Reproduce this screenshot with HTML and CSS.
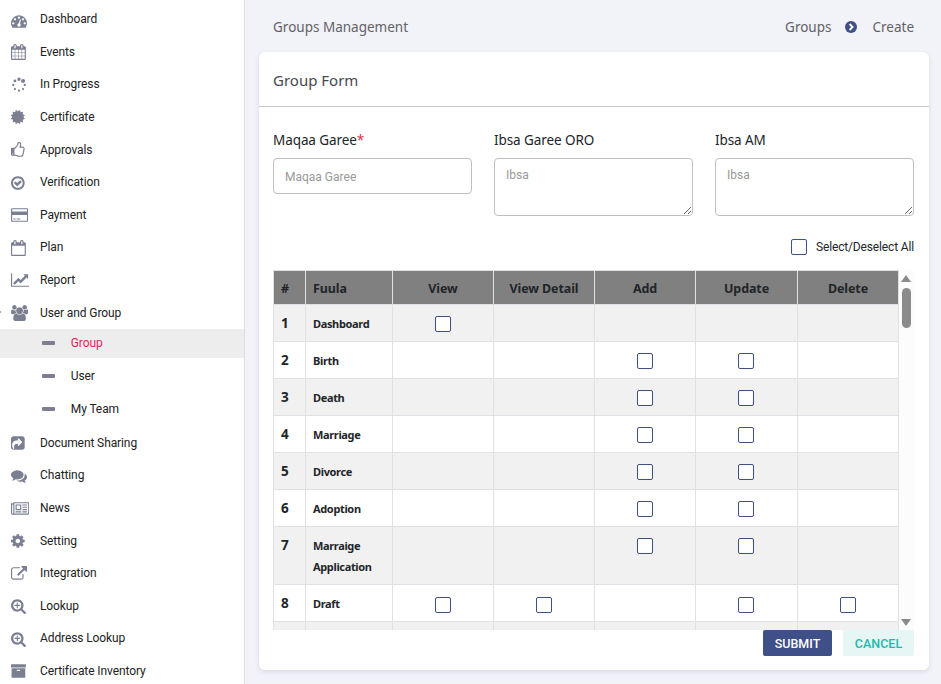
FILE: index.html
```html
<!DOCTYPE html>
<html lang="en">
<head>
<meta charset="utf-8">
<title>Groups Management</title>
<link rel="stylesheet" href="styles.css">
</head>
<body>
<nav class="sidebar" id="sidebar"></nav>
<main class="main">
  <header class="topbar">
    <span class="page-title">Groups Management</span>
    <span class="crumb-parent">Groups</span>
    <svg class="crumb-icon" viewBox="0 0 12 12"><circle cx="6" cy="6" r="6"/><path d="M4.6 3l3 3-3 3"/></svg>
    <span class="crumb-current">Create</span>
  </header>
  <section class="card">
    <h1 class="card-title"><span>Group Form</span></h1>
    <div class="card-body">
      <div class="fields">
        <label class="field"><span class="label l1">Maqaa Garee<b>*</b></span><input class="control" placeholder="Maqaa Garee"></label>
        <label class="field"><span class="label l2">Ibsa Garee ORO</span><textarea class="control area" placeholder="Ibsa"></textarea></label>
        <label class="field"><span class="label l3">Ibsa AM</span><textarea class="control area" placeholder="Ibsa"></textarea></label>
      </div>
      <label class="select-all"><input type="checkbox" class="check"><span>Select/Deselect All</span></label>
      <div class="table-wrap">
        <table>
          <colgroup><col class="c-num"><col class="c-name"><col class="c-act"><col class="c-act"><col class="c-act"><col class="c-upd"><col class="c-act"></colgroup>
          <thead><tr><th>#</th><th>Fuula</th><th>View</th><th>View Detail</th><th>Add</th><th>Update</th><th>Delete</th></tr></thead>
          <tbody id="rows"></tbody>
        </table>
        <div class="scrollbar"><i class="arrow up"></i><i class="thumb"></i><i class="arrow down"></i></div>
      </div>
      <div class="actions"><button class="btn submit">SUBMIT</button><button class="btn cancel">CANCEL</button></div>
    </div>
  </section>
</main>
<script src="app.js"></script>
</body>
</html>
```
FILE: styles.css
```css
* { box-sizing: border-box; }
body { margin: 0; height: 684px; overflow: hidden; display: flex; background: #f2f2f9; font-family: Roboto, sans-serif; font-size: 12px; color: #212529; }
.sidebar { width: 245px; flex: none; padding-top: 2.9px; background: #fff; border-right: 1px solid #dedee3; overflow: hidden; letter-spacing: -.1px; }
.item { display: flex; align-items: center; height: 32.6px; padding-left: 10.6px; color: #222; position: relative; }
.sub ~ .item { height: 32.57px; }
.item svg { height: 16px; flex: none; margin-top: 1px; fill: #7b7f92; }
.icon { width: 29.4px; flex: none; display: flex; }
.item:first-child svg { margin-top: 3px; }
.item.open::before { content: ""; position: absolute; left: 0; top: 15px; width: 1px; height: 2px; background: #aaa; }
.sub { display: flex; align-items: center; height: 29px; margin-bottom: 3.8px; padding-left: 42px; color: #222; }
.sub:has(+ .item) { margin-bottom: 3.2px; }
.sub i { width: 13px; height: 4px; border-radius: 1px; background: #7b7f92; margin-right: 15.8px; }
.sub.active { background: #ededed; color: #e91e63; }
.main { flex: 1; padding: 0 12px 0 14px; }
.topbar { height: 52px; padding: 1px 15px 0 14px; display: flex; align-items: center; font-family: "Noto Sans", sans-serif; font-size: 13.5px; color: #626267; }
.page-title { margin-right: auto; }
.crumb-icon { width: 12px; height: 12px; margin: 1px 15px 0 14px; fill: #3f4f87; }
.crumb-icon path { fill: none; stroke: #fff; stroke-width: 1.8; }
.card { height: 618px; background: #fff; border-radius: 6px; box-shadow: 0 2px 5px rgba(60,60,100,.13); }
.card-title { margin: 0; height: 55px; padding: 1px 14px 0; display: flex; align-items: center; border-bottom: 1px solid #c6c6c8; font: 400 15px "Noto Sans", sans-serif; color: #46494f; }
.card-body { padding: 22px 15px 0 14px; }
.fields { display: grid; grid-template-columns: repeat(3, 199px); gap: 22px; height: 110px; }
.field { display: flex; flex-direction: column; }
.label { height: 29px; line-height: 23px; font-family: "Noto Sans", sans-serif; font-size: 13.5px; letter-spacing: -.08px; white-space: nowrap; }
.label b { color: #e0304a; font-weight: 400; }
.control { width: 199px; height: 36px; padding: 1px 11px 0; border: 1px solid #bfbfc1; border-radius: 4px; background: #fff; font: 12px Roboto, sans-serif; }
.area { height: 58px; padding-top: 9px; line-height: 14px; resize: both; }
.control::placeholder { color: #999; }
.select-all { display: flex; justify-content: flex-end; align-items: center; gap: 9px; height: 16px; letter-spacing: -.15px; }
.check { appearance: none; display: block; width: 16px; height: 16px; margin: 0; border: 1px solid #3f4f87; border-radius: 2px; background: #fff; }
.table-wrap { display: flex; justify-content: space-between; height: 360px; margin-top: 15px; overflow: hidden; }
table { width: 626px; flex: none; align-self: flex-start; table-layout: fixed; border-collapse: collapse; font-family: "Noto Sans", sans-serif; font-weight: 700; }
.c-num { width: 32px; }
.c-name { width: 87px; }
.c-act { width: 101px; }
.c-upd { width: 102px; }
th, td { border: 1px solid #dee2e6; padding: 0 7px; }
th { height: 34px; padding-top: 1px; background: #808080; font-size: 12.5px; letter-spacing: -.1px; text-align: center; }
th:first-child, th:nth-child(2) { text-align: left; }
td { height: 37px; font-size: 11px; line-height: 21px; letter-spacing: -.35px; vertical-align: top; padding-top: 8px; }
td:first-child { font-size: 13.5px; padding-top: 8px; line-height: 20px; }
td .check { margin: 3px auto 0; }
td:nth-child(6) { padding-right: 9px; }
tr.tall td { height: 58px; }
.draft .check { margin-top: 4px; }
tbody tr:nth-child(odd) { background: #f1f1f1; }
.scrollbar { width: 15px; padding: 5px 0 4px 2px; display: flex; flex-direction: column; align-items: flex-start; background: #fcfcfc; }
.arrow { border: 5px solid transparent; width: 0; height: 0; }
.up { border-bottom: 7px solid #8a8a8a; border-top: 0; }
.down { border-top: 7px solid #8a8a8a; border-bottom: 0; margin-top: auto; }
.thumb { width: 9px; height: 40px; margin: 6px 0 0 1px; border-radius: 5px; background: #8b8b8b; }
.actions { display: flex; justify-content: flex-end; gap: 11px; }
.btn { height: 26px; padding: 1px 0 0; border: 0; border-radius: 2px; font: 500 12.5px Roboto, sans-serif; }
.submit { width: 69px; background: #3f4f87; color: #fff; }
.cancel { width: 71px; background: #e5f6f5; color: #1db9aa; }
```
FILE: app.js
```js
const calFrame = "m768 0v-288q0-14-9-23t-23-9h-64q-14 0-23 9t-9 23v288q0 14 9 23t23 9h64q14 0 23-9t9-23zm384-64v1280q0 52-38 90t-90 38h-1408q-52 0-90-38t-38-90v-1280q0-52 38-90t90-38h128v-96q0-66 47-113t113-47h64q66 0 113 47t47 113v96h384v-96q0-66 47-113t113-47h64q66 0 113 47t47 113v96h128q52 0 90 38t38 90z";
const calPegs = "m384-1216v-288q0-14-9-23t-23-9h-64q-14 0-23 9t-9 23v288q0 14 9 23t23 9h64q14 0 23-9t9-23z";
const zoomIn = "M1024 800v64q0 13-9.5 22.5t-22.5 9.5h-224v224q0 13-9.5 22.5t-22.5 9.5h-64q-13 0-22.5-9.5t-9.5-22.5v-224h-224q-13 0-22.5-9.5t-9.5-22.5v-64q0-13 9.5-22.5t22.5-9.5h224v-224q0-13 9.5-22.5t22.5-9.5h64q13 0 22.5 9.5t9.5 22.5v224h224q13 0 22.5 9.5t9.5 22.5zm128 32q0-185-131.5-316.5t-316.5-131.5-316.5 131.5-131.5 316.5 131.5 316.5 316.5 131.5 316.5-131.5 131.5-316.5zm512 832q0 53-37.5 90.5t-90.5 37.5q-54 0-90-38l-343-342q-179 124-399 124-143 0-273.5-55.5t-225-150-150-225-55.5-273.5 55.5-273.5 150-225 225-150 273.5-55.5 273.5 55.5 225 150 150 225 55.5 273.5q0 220-124 399l343 343q37 37 37 90z";

/* Each icon: left edge of the view box, width in 1/112 px units, path */
const icons = {
  gauge: [0, 1792, "M384 1152q0-53-37.5-90.5t-90.5-37.5-90.5 37.5-37.5 90.5 37.5 90.5 90.5 37.5 90.5-37.5 37.5-90.5zm192-448q0-53-37.5-90.5t-90.5-37.5-90.5 37.5-37.5 90.5 37.5 90.5 90.5 37.5 90.5-37.5 37.5-90.5zm428 481l101-382q6-26-7.5-48.5t-38.5-29.5-48 6.5-30 39.5l-101 382q-60 5-107 43.5t-63 98.5q-20 77 20 146t117 89 146-20 89-117q16-60-6-117t-72-91zm660-33q0-53-37.5-90.5t-90.5-37.5-90.5 37.5-37.5 90.5 37.5 90.5 90.5 37.5 90.5-37.5 37.5-90.5zm-640-640q0-53-37.5-90.5t-90.5-37.5-90.5 37.5-37.5 90.5 37.5 90.5 90.5 37.5 90.5-37.5 37.5-90.5zm448 192q0-53-37.5-90.5t-90.5-37.5-90.5 37.5-37.5 90.5 37.5 90.5 90.5 37.5 90.5-37.5 37.5-90.5zm320 448q0 261-141 483-19 29-54 29h-1402q-35 0-54-29-141-221-141-483 0-182 71-348t191-286 286-191 348-71 348 71 286 191 191 286 71 348z"],
  calendar: [64, 1728, "M192 1664h288v-288h-288v288zm352 0h320v-288h-320v288zm-352-352h288v-320h-288v320zm352 0h320v-320h-320v320zm-352-384h288v-288h-288v288zm736 736h320v-288h-320v288zm-384-736h320v-288h-320v288zm768 736h288v-288h-288v288zm-384-352h320v-320h-320v320zm-352-864v-288q0-13-9.5-22.5t-22.5-9.5h-64q-13 0-22.5 9.5t-9.5 22.5v288q0 13 9.5 22.5t22.5 9.5h64q13 0 22.5-9.5t9.5-22.5zm736 864h288v-320h-288v320zm-384-384h320v-288h-320v288zm384 0h288v-288h-288v288zm32-480v-288q0-13-9.5-22.5t-22.5-9.5h-64q-13 0-22.5 9.5t-9.5 22.5v288q0 13 9.5 22.5t22.5 9.5h64q13 0 22.5-9.5t9.5-22.5zm384-64v1280q0 52-38 90t-90 38h-1408q-52 0-90-38t-38-90v-1280q0-52 38-90t90-38h128v-96q0-66 47-113t113-47h64q66 0 113 47t47 113v96h384v-96q0-66 47-113t113-47h64q66 0 113 47t47 113v96h128q52 0 90 38t38 90z"],
  spinner: [0, 1792, [[896,256,190],[1350,440,224],[440,440,160],[256,896,128],[440,1350,128],[896,1536,128],[1350,1350,128],[1536,896,128]].map(([x, y, r]) => `M${x - r} ${y}a${r} ${r} 0 1 0 ${2 * r} 0a${r} ${r} 0 1 0 ${-2 * r} 0z`).join("")],
  seal: [128, 1664, "M1504 896l138 135q30 28 20 70-12 41-52 51l-188 48 53 186q12 41-19 70-29 31-70 19l-186-53-48 188q-10 40-51 52-12 2-19 2-31 0-51-22l-135-138-135 138q-28 30-70 20-41-11-51-52l-48-188-186 53q-41 12-70-19-31-29-19-70l53-186-188-48q-40-10-52-51-10-42 20-70l138-135-138-135q-30-28-20-70 12-41 52-51l188-48-53-186q-12-41 19-70 29-31 70-19l186 53 48-188q10-41 51-51 41-12 70 19l135 139 135-139q29-30 70-19 41 10 51 51l48 188 186-53q41-12 70 19 31 29 19 70l-53 186 188 48q40 10 52 51 10 42-20 70z"],
  thumb: [128, 1664, "M384 1344q0-26-19-45t-45-19-45 19-19 45 19 45 45 19 45-19 19-45zm1152-576q0-51-39-89.5t-89-38.5h-352q0-58 48-159.5t48-160.5q0-98-32-145t-128-47q-26 26-38 85t-30.5 125.5-59.5 109.5q-22 23-77 91-4 5-23 30t-31.5 41-34.5 42.5-40 44-38.5 35.5-40 27-35.5 9h-32v640h32q13 0 31.5 3t33 6.5 38 11 35 11.5 35.5 12.5 29 10.5q211 73 342 73h121q192 0 192-167 0-26-5-56 30-16 47.5-52.5t17.5-73.5-18-69q53-50 53-119 0-25-10-55.5t-25-47.5q32-1 53.5-47t21.5-81zm128-1q0 89-49 163 9 33 9 69 0 77-38 144 3 21 3 43 0 101-60 178 1 139-85 219.5t-227 80.5h-129q-96 0-189.5-22.5t-216.5-65.5q-116-40-138-40h-288q-53 0-90.5-37.5t-37.5-90.5v-640q0-53 37.5-90.5t90.5-37.5h274q36-24 137-155 58-75 107-128 24-25 35.5-85.5t30.5-126.5 62-108q39-37 90-37 84 0 151 32.5t102 101.5 35 186q0 93-48 192h176q104 0 180 76t76 179z"],
  check: [128, 1664, "M1299 813l-422 422q-19 19-45 19t-45-19l-294-294q-19-19-19-45t19-45l102-102q19-19 45-19t45 19l147 147 275-275q19-19 45-19t45 19l102 102q19 19 19 45t-19 45zm141 83q0-148-73-273t-198-198-273-73-273 73-198 198-73 273 73 273 198 198 273 73 273-73 198-198 73-273zm224 0q0 209-103 385.5t-279.5 279.5-385.5 103-385.5-103-279.5-279.5-103-385.5 103-385.5 279.5-279.5 385.5-103 385.5 103 279.5 279.5 103 385.5z"],
  card: [0, 1920, "M1760 128q66 0 113 47t47 113v1216q0 66-47 113t-113 47h-1600q-66 0-113-47t-47-113v-1216q0-66 47-113t113-47h1600zm-1600 128q-13 0-22.5 9.5t-9.5 22.5v224h1664v-224q0-13-9.5-22.5t-22.5-9.5h-1600zm1600 1280q13 0 22.5-9.5t9.5-22.5v-608h-1664v608q0 13 9.5 22.5t22.5 9.5h1600zm-1504-128v-128h256v128h-256zm384 0v-128h384v128h-384z"],
  plan: [64, 1728, "M192 1664h1408v-1024h-1408v1024z" + calPegs + calFrame],
  chart: [0, 2048, "M2048 1536v128h-2048v-1536h128v1408h1920zm-128-1248v435q0 21-19.5 29.5t-35.5-7.5l-121-121-633 633q-10 10-23 10t-23-10l-233-233-416 416-192-192 585-585q10-10 23-10t23 10l233 233 464-464-121-121q-16-16-7.5-35.5t29.5-19.5h435q14 0 23 9t9 23z"],
  users: [0, 1920, "M593 896q-162 5-265 128h-134q-82 0-138-40.5t-56-118.5q0-353 124-353 6 0 43.5 21t97.5 42.5 119 21.5q67 0 133-23-5 37-5 66 0 159 93 283zm1071 637q0 120-73 189.5t-194 69.5h-874q-121 0-194-69.5t-73-189.5q0-53 3.5-103.5t14-109 26.5-108.5 43-97.5 62-81 85.5-53.5 111.5-20q10 0 43 21.5t73 48 107 48 135 21.5 135-21.5 107-48 73-48 43-21.5q61 0 111.5 20t85.5 53.5 62 81 43 97.5 26.5 108.5 14 109 3.5 103.5zm-1024-1277q0 106-75 181t-181 75-181-75-75-181 75-181 181-75 181 75 75 181zm704 384q0 159-112.5 271.5t-271.5 112.5-271.5-112.5-112.5-271.5 112.5-271.5 271.5-112.5 271.5 112.5 112.5 271.5zm576 225q0 78-56 118.5t-138 40.5h-134q-103-123-265-128 93-124 93-283 0-29-5-66 66 23 133 23 59 0 119-21.5t97.5-42.5 43.5-21q124 0 124 353zm-128-609q0 106-75 181t-181 75-181-75-75-181 75-181 181-75 181 75 75 181z"],
  share: [128, 1664, "M1005 1197l352-352q19-19 19-45t-19-45l-352-352q-30-31-69-14-40 17-40 59v160q-119 0-216 19.5t-162.5 51-114 79-76.5 95.5-44.5 109-21.5 111.5-5 110.5q0 181 167 404 11 12 25 12 7 0 13-3 22-9 19-33-44-354 62-473 46-52 130-75.5t224-23.5v160q0 42 40 59 12 5 24 5 26 0 45-19zm659-781v960q0 119-84.5 203.5t-203.5 84.5h-960q-119 0-203.5-84.5t-84.5-203.5v-960q0-119 84.5-203.5t203.5-84.5h960q119 0 203.5 84.5t84.5 203.5z"],
  comments: [0, 1792, "M1408 768q0 139-94 257t-256.5 186.5-353.5 68.5q-86 0-176-16-124 88-278 128-36 9-86 16h-3q-11 0-20.5-8t-11.5-21q-1-3-1-6.5t.5-6.5 2-6l2.5-5 3.5-5.5 4-5 4.5-5 4-4.5q5-6 23-25t26-29.5 22.5-29 25-38.5 20.5-44q-124-72-195-177t-71-224q0-139 94-257t256.5-186.5 353.5-68.5 353.5 68.5 256.5 186.5 94 257zm384 256q0 120-71 224.5t-195 176.5q10 24 20.5 44t25 38.5 22.5 29 26 29.5 23 25q1 1 4 4.5t4.5 5 4 5 3.5 5.5l2.5 5 2 6 .5 6.5-1 6.5q-3 14-13 22t-22 7q-50-7-86-16-154-40-278-128-90 16-176 16-271 0-472-132 58 4 88 4 161 0 309-45t264-129q125-92 192-212t67-254q0-77-23-152 129 71 204 178t75 230z"],
  news: [0, 2048, "M1024 512h-384v384h384v-384zm128 640v128h-640v-128h640zm0-768v640h-640v-640h640zm640 768v128h-512v-128h512zm0-256v128h-512v-128h512zm0-256v128h-512v-128h512zm0-256v128h-512v-128h512zm-1536 960v-960h-128v960q0 26 19 45t45 19 45-19 19-45zm1664 0v-1088h-1536v1088q0 33-11 64h1483q26 0 45-19t19-45zm128-1216v1216q0 80-56 136t-136 56h-1664q-80 0-136-56t-56-136v-1088h256v-128h1792z"],
  cog: [128, 1664, "M1152 896q0-106-75-181t-181-75-181 75-75 181 75 181 181 75 181-75 75-181zm512-109v222q0 12-8 23t-20 13l-185 28q-19 54-39 91 35 50 107 138 10 12 10 25t-9 23q-27 37-99 108t-94 71q-12 0-26-9l-138-108q-44 23-91 38-16 136-29 186-7 28-36 28h-222q-14 0-24.5-8.5t-11.5-21.5l-28-184q-49-16-90-37l-141 107q-10 9-25 9-14 0-25-11-126-114-165-168-7-10-7-23 0-12 8-23 15-21 51-66.5t54-70.5q-27-50-41-99l-183-27q-13-2-21-12.5t-8-23.5v-222q0-12 8-23t19-13l186-28q14-46 39-92-40-57-107-138-10-12-10-24 0-10 9-23 26-36 98.5-107.5t94.5-71.5q13 0 26 10l138 107q44-23 91-38 16-136 29-186 7-28 36-28h222q14 0 24.5 8.5t11.5 21.5l28 184q49 16 90 37l142-107q9-9 24-9 13 0 25 10 129 119 165 170 7 8 7 22 0 12-8 23-15 21-51 66.5t-54 70.5q26 50 41 98l183 28q13 2 21 12.5t8 23.5z"],
  external: [0, 1792, "M1408 928v320q0 119-84.5 203.5t-203.5 84.5h-832q-119 0-203.5-84.5t-84.5-203.5v-832q0-119 84.5-203.5t203.5-84.5h704q14 0 23 9t9 23v64q0 14-9 23t-23 9h-704q-66 0-113 47t-47 113v832q0 66 47 113t113 47h832q66 0 113-47t47-113v-320q0-14 9-23t23-9h64q14 0 23 9t9 23zm384-864v512q0 26-19 45t-45 19-45-19l-176-176-652 652q-10 10-23 10t-23-10l-114-114q-10-10-10-23t10-23l652-652-176-176q-19-19-19-45t19-45 45-19h512q26 0 45 19t19 45z"],
  zoom: [0, 1792, zoomIn],
  archive: [64, 1728, "M1088 832q0-26-19-45t-45-19h-256q-26 0-45 19t-19 45 19 45 45 19h256q26 0 45-19t19-45zm576-192v960q0 26-19 45t-45 19h-1408q-26 0-45-19t-19-45v-960q0-26 19-45t45-19h1408q26 0 45 19t19 45zm64-448v256q0 26-19 45t-45 19h-1536q-26 0-45-19t-19-45v-256q0-26 19-45t45-19h1536q26 0 45 19t19 45z"]
};

const menu = [
  ["gauge", "Dashboard"], ["calendar", "Events"], ["spinner", "In Progress"], ["seal", "Certificate"],
  ["thumb", "Approvals"], ["check", "Verification"], ["card", "Payment"], ["plan", "Plan"],
  ["chart", "Report"], ["users", "User and Group", ["Group", "User", "My Team"]],
  ["share", "Document Sharing"], ["comments", "Chatting"], ["news", "News"], ["cog", "Setting"],
  ["external", "Integration"], ["zoom", "Lookup"], ["zoom", "Address Lookup"], ["archive", "Certificate Inventory"]
];

document.getElementById("sidebar").innerHTML = menu.map(([icon, text, subs]) => {
  const [x, w, d] = icons[icon];
  const svg = `<svg viewBox="${x} 0 ${w} 1792" width="${w / 112}"><path fill-rule="evenodd" d="${d}"/></svg>`;
  const children = (subs || []).map((s, i) => `<div class="sub${i ? "" : " active"}"><i></i>${s}</div>`).join("");
  return `<div class="item${subs ? " open" : ""}"><span class="icon">${svg}</span>${text}</div>${children}`;
}).join("");

/* Permission columns: view, view detail, add, update, delete */
const pages = [
  ["Dashboard", "10000"], ["Birth", "00110"], ["Death", "00110"], ["Marriage", "00110"], ["Divorce", "00110"],
  ["Adoption", "00110"], ["Marraige Application", "00110", "tall"], ["Draft", "11011", "draft"], ["", "00000"]
];
document.getElementById("rows").innerHTML = pages.map(([name, flags, cls], i) =>
  `<tr class="${cls || ""}"><td>${name ? i + 1 : ""}</td><td>${name}</td>` +
  [...flags].map(f => `<td>${f === "1" ? '<input type="checkbox" class="check">' : ""}</td>`).join("") + "</tr>"
).join("");
```
